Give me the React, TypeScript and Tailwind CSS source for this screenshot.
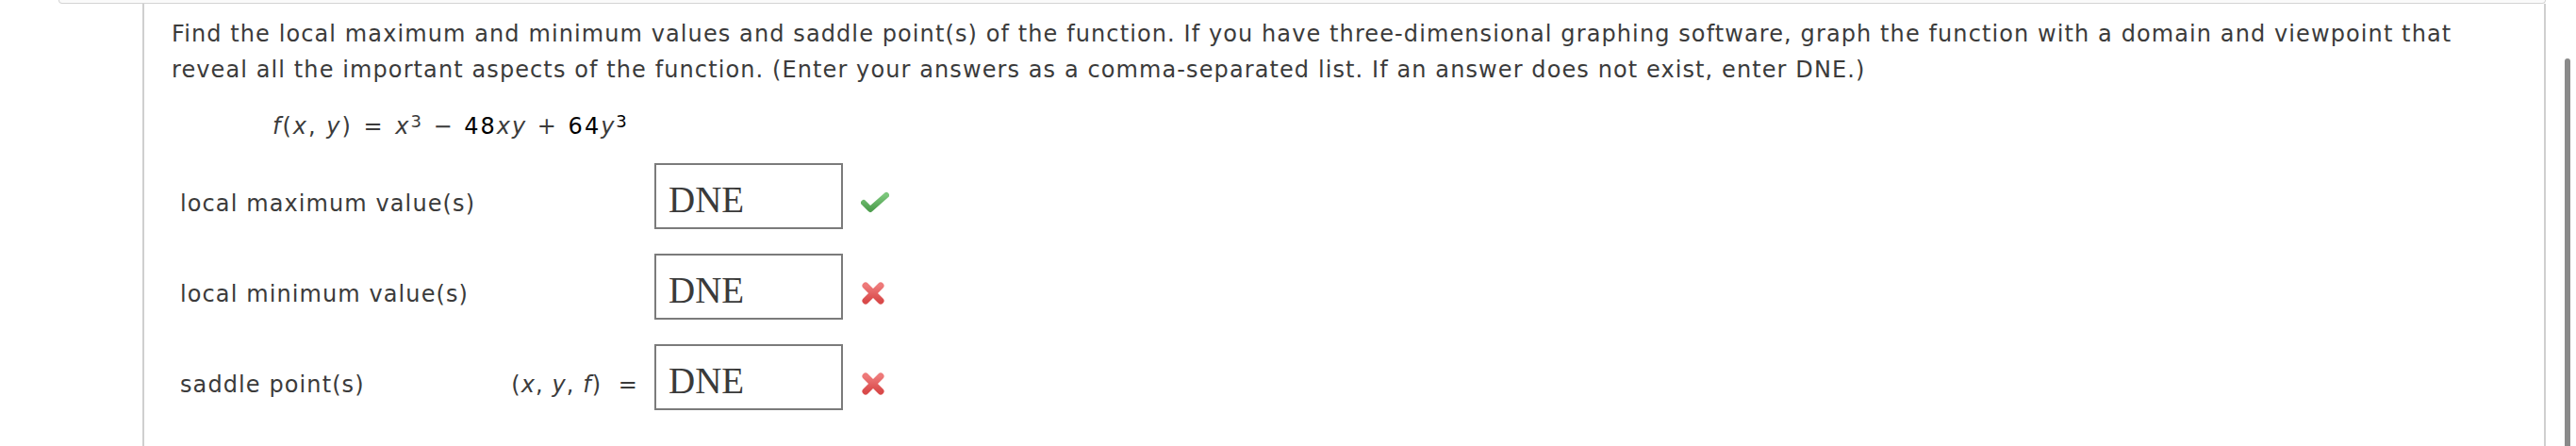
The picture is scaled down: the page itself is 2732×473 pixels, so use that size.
import React from "react";

const CheckIcon = () => (
  <svg width="30" height="24" viewBox="0 0 30 24" className="shrink-0">
    <defs>
      <linearGradient id="gchk" x1="0" y1="0" x2="0" y2="1">
        <stop offset="0" stopColor="#7cc77c" />
        <stop offset="1" stopColor="#4f9f4f" />
      </linearGradient>
    </defs>
    <polyline
      points="3,12 10,19 27,4"
      fill="none"
      stroke="url(#gchk)"
      strokeWidth="6"
      strokeLinecap="round"
      strokeLinejoin="round"
    />
  </svg>
);

const XIcon = () => (
  <svg width="26" height="26" viewBox="0 0 26 26" className="shrink-0">
    <defs>
      <linearGradient id="gx" x1="0" y1="0" x2="0" y2="1">
        <stop offset="0" stopColor="#ee7a7a" />
        <stop offset="1" stopColor="#d94a4a" />
      </linearGradient>
    </defs>
    <g stroke="url(#gx)" strokeWidth="7" strokeLinecap="round">
      <line x1="5" y1="5" x2="21" y2="21" />
      <line x1="21" y1="5" x2="5" y2="21" />
    </g>
  </svg>
);

const AnswerBox = ({ ok }: { ok: boolean }) => (
  <div className="flex items-center">
    <div className="w-[200px] h-[70px] border-2 border-[#7b7b7b] bg-white pl-[13px] pt-[8px] tracking-normal">
      <span
        className="text-[39px] leading-normal text-[#3a3a3a]"
        style={{ fontFamily: '"Liberation Serif", "Times New Roman", serif' }}
      >
        DNE
      </span>
    </div>
    <div className="ml-[19px] pt-[14px] flex items-center">{ok ? <CheckIcon /> : <XIcon />}</div>
  </div>
);

const Row = ({ label, ok, prefix }: { label: string; ok: boolean; prefix?: React.ReactNode }) => (
  <div className="flex items-center h-[70px]">
    <div className="w-[503px] flex items-center justify-between pt-[16px]">
      <span>{label}</span>
      {prefix ? <span className="pr-[17px]">{prefix}</span> : null}
    </div>
    <AnswerBox ok={ok} />
  </div>
);

export default function App() {
  return (
    <div
      className="flex w-[2732px] h-[473px] bg-white overflow-hidden text-[#3b3b3b]"
      style={{ fontFamily: '"DejaVu Sans", Verdana, sans-serif' }}
    >
      <div className="w-[2700px] flex flex-col">
        <div className="ml-[62px] w-[2638px] h-[4px] border-x border-b border-[#d4d4d4] rounded-b-[4px] bg-[#fafafa]" />
        <div className="ml-[151px] w-[2549px] flex-1 border-l-2 border-r-2 border-[#cfcfcf] pl-[29px] pt-[13px] text-[24px] leading-[38px] tracking-[1.1px]">
          <p className="whitespace-nowrap">
            Find the local maximum and minimum values and saddle point(s) of the function. If you have three-dimensional graphing software, graph the function with a domain and viewpoint that
            <br />
            reveal all the important aspects of the function. (Enter your answers as a comma-separated list. If an answer does not exist, enter DNE.)
          </p>
          <div className="ml-[107px] mt-[22px] whitespace-nowrap tracking-[2px]">
            <i>f</i>(<i>x</i>, <i>y</i>) <span className="mx-[2px]">=</span> <i>x</i>
            <span className="relative top-[-7px] text-[18px] leading-none">3</span>
            <span className="mx-[1px]"> &minus; </span>
            <span className="text-black">48</span>
            <i>xy</i>
            <span className="mx-[1px]"> + </span>
            <span className="text-black">64</span>
            <i>y</i>
            <span className="relative top-[-7px] text-[18px] leading-none text-black">3</span>
          </div>
          <div className="ml-[9px] mt-[20px] flex flex-col gap-[26px]">
            <Row label="local maximum value(s)" ok={true} />
            <Row label="local minimum value(s)" ok={false} />
            <Row
              label="saddle point(s)"
              ok={false}
              prefix={
                <>
                  (<i>x</i>, <i>y</i>, <i>f</i>)&nbsp; =
                </>
              }
            />
          </div>
        </div>
      </div>
      <div className="ml-[20px] mt-[62px] w-[6px] h-[411px] rounded-t-full bg-[#8a8a8a]" />
    </div>
  );
}
